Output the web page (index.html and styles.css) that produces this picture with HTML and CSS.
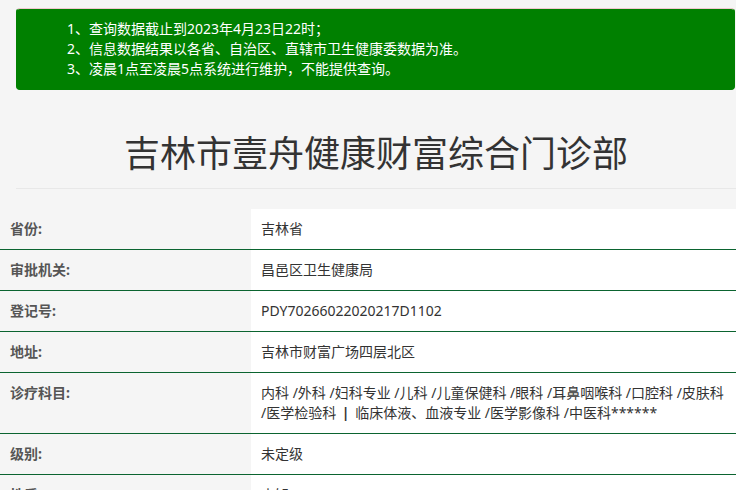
FILE: index.html
```html
<!DOCTYPE html>
<html lang="zh-CN">
<head>
<meta charset="utf-8">
<title>吉林市壹舟健康财富综合门诊部</title>
<link rel="stylesheet" href="styles.css">
</head>
<body>
<div class="wrap">
  <div class="notice">
    <p>1、查询数据截止到2023年4月23日22时；</p>
    <p>2、信息数据结果以各省、自治区、直辖市卫生健康委数据为准。</p>
    <p>3、凌晨1点至凌晨5点系统进行维护，不能提供查询。</p>
  </div>
  <h1 class="title">吉林市壹舟健康财富综合门诊部</h1>
  <hr class="rule">
</div>
<table class="info">
  <tr><th>省份:</th><td>吉林省</td></tr>
  <tr><th>审批机关:</th><td>昌邑区卫生健康局</td></tr>
  <tr><th>登记号:</th><td>PDY70266022020217D1102</td></tr>
  <tr><th>地址:</th><td>吉林市财富广场四层北区</td></tr>
  <tr><th>诊疗科目:</th><td><span class="item">内科</span> <span class="item">/外科</span> <span class="item">/妇科专业</span> <span class="item">/儿科</span> <span class="item">/儿童保健科</span> <span class="item">/眼科</span> <span class="item">/耳鼻咽喉科</span> <span class="item">/口腔科</span> <span class="item">/皮肤科</span> <span class="item">/医学检验科</span> <b class="bar">|</b> 临床体液、血液专业 <span class="item">/医学影像科</span> <span class="item">/中医科******</span></td></tr>
  <tr><th>级别:</th><td>未定级</td></tr>
  <tr><th>性质:</th><td>未知</td></tr>
</table>
</body>
</html>
```
FILE: styles.css
```css
html, body {
  margin: 0;
  padding: 0;
}
body {
  background: #f5f5f5;
  color: #333;
  font-family: "Noto Sans", "Noto Sans CJK SC", sans-serif;
  font-size: 14px;
  line-height: 20px;
}
.wrap {
  padding: 8px 0 0 16px;
}
.notice {
  background: #008000;
  color: #fff;
  border: 1px solid #008000;
  border-top-color: #f0c8cf;
  border-radius: 4px;
  margin-right: 1px;
  padding: 10px 15px 10px 50px;
}
.notice p {
  margin: 0;
}
.title {
  margin: 41px 0 0;
  font-size: 36px;
  line-height: 40px;
  font-weight: normal;
  text-align: center;
  color: #333;
  font-family: "Noto Sans CJK SC", sans-serif;
}
.rule {
  border: 0;
  border-top: 1px solid #e8e8e8;
  margin: 17px 0 20px;
  height: 0;
}
.info {
  width: 100%;
  border-collapse: collapse;
}
.info th, .info td {
  padding: 10px;
  text-align: left;
  vertical-align: top;
  border-bottom: 1px solid #0b6430;
}
.info th {
  width: 231px;
  background: #f5f5f5;
  color: #555;
  font-weight: bold;
}
.info td {
  background: #fff;
  color: #333;
  padding-right: 0;
}
.item {
  white-space: nowrap;
}
.bar {
  padding: 0 2px;
}
```
